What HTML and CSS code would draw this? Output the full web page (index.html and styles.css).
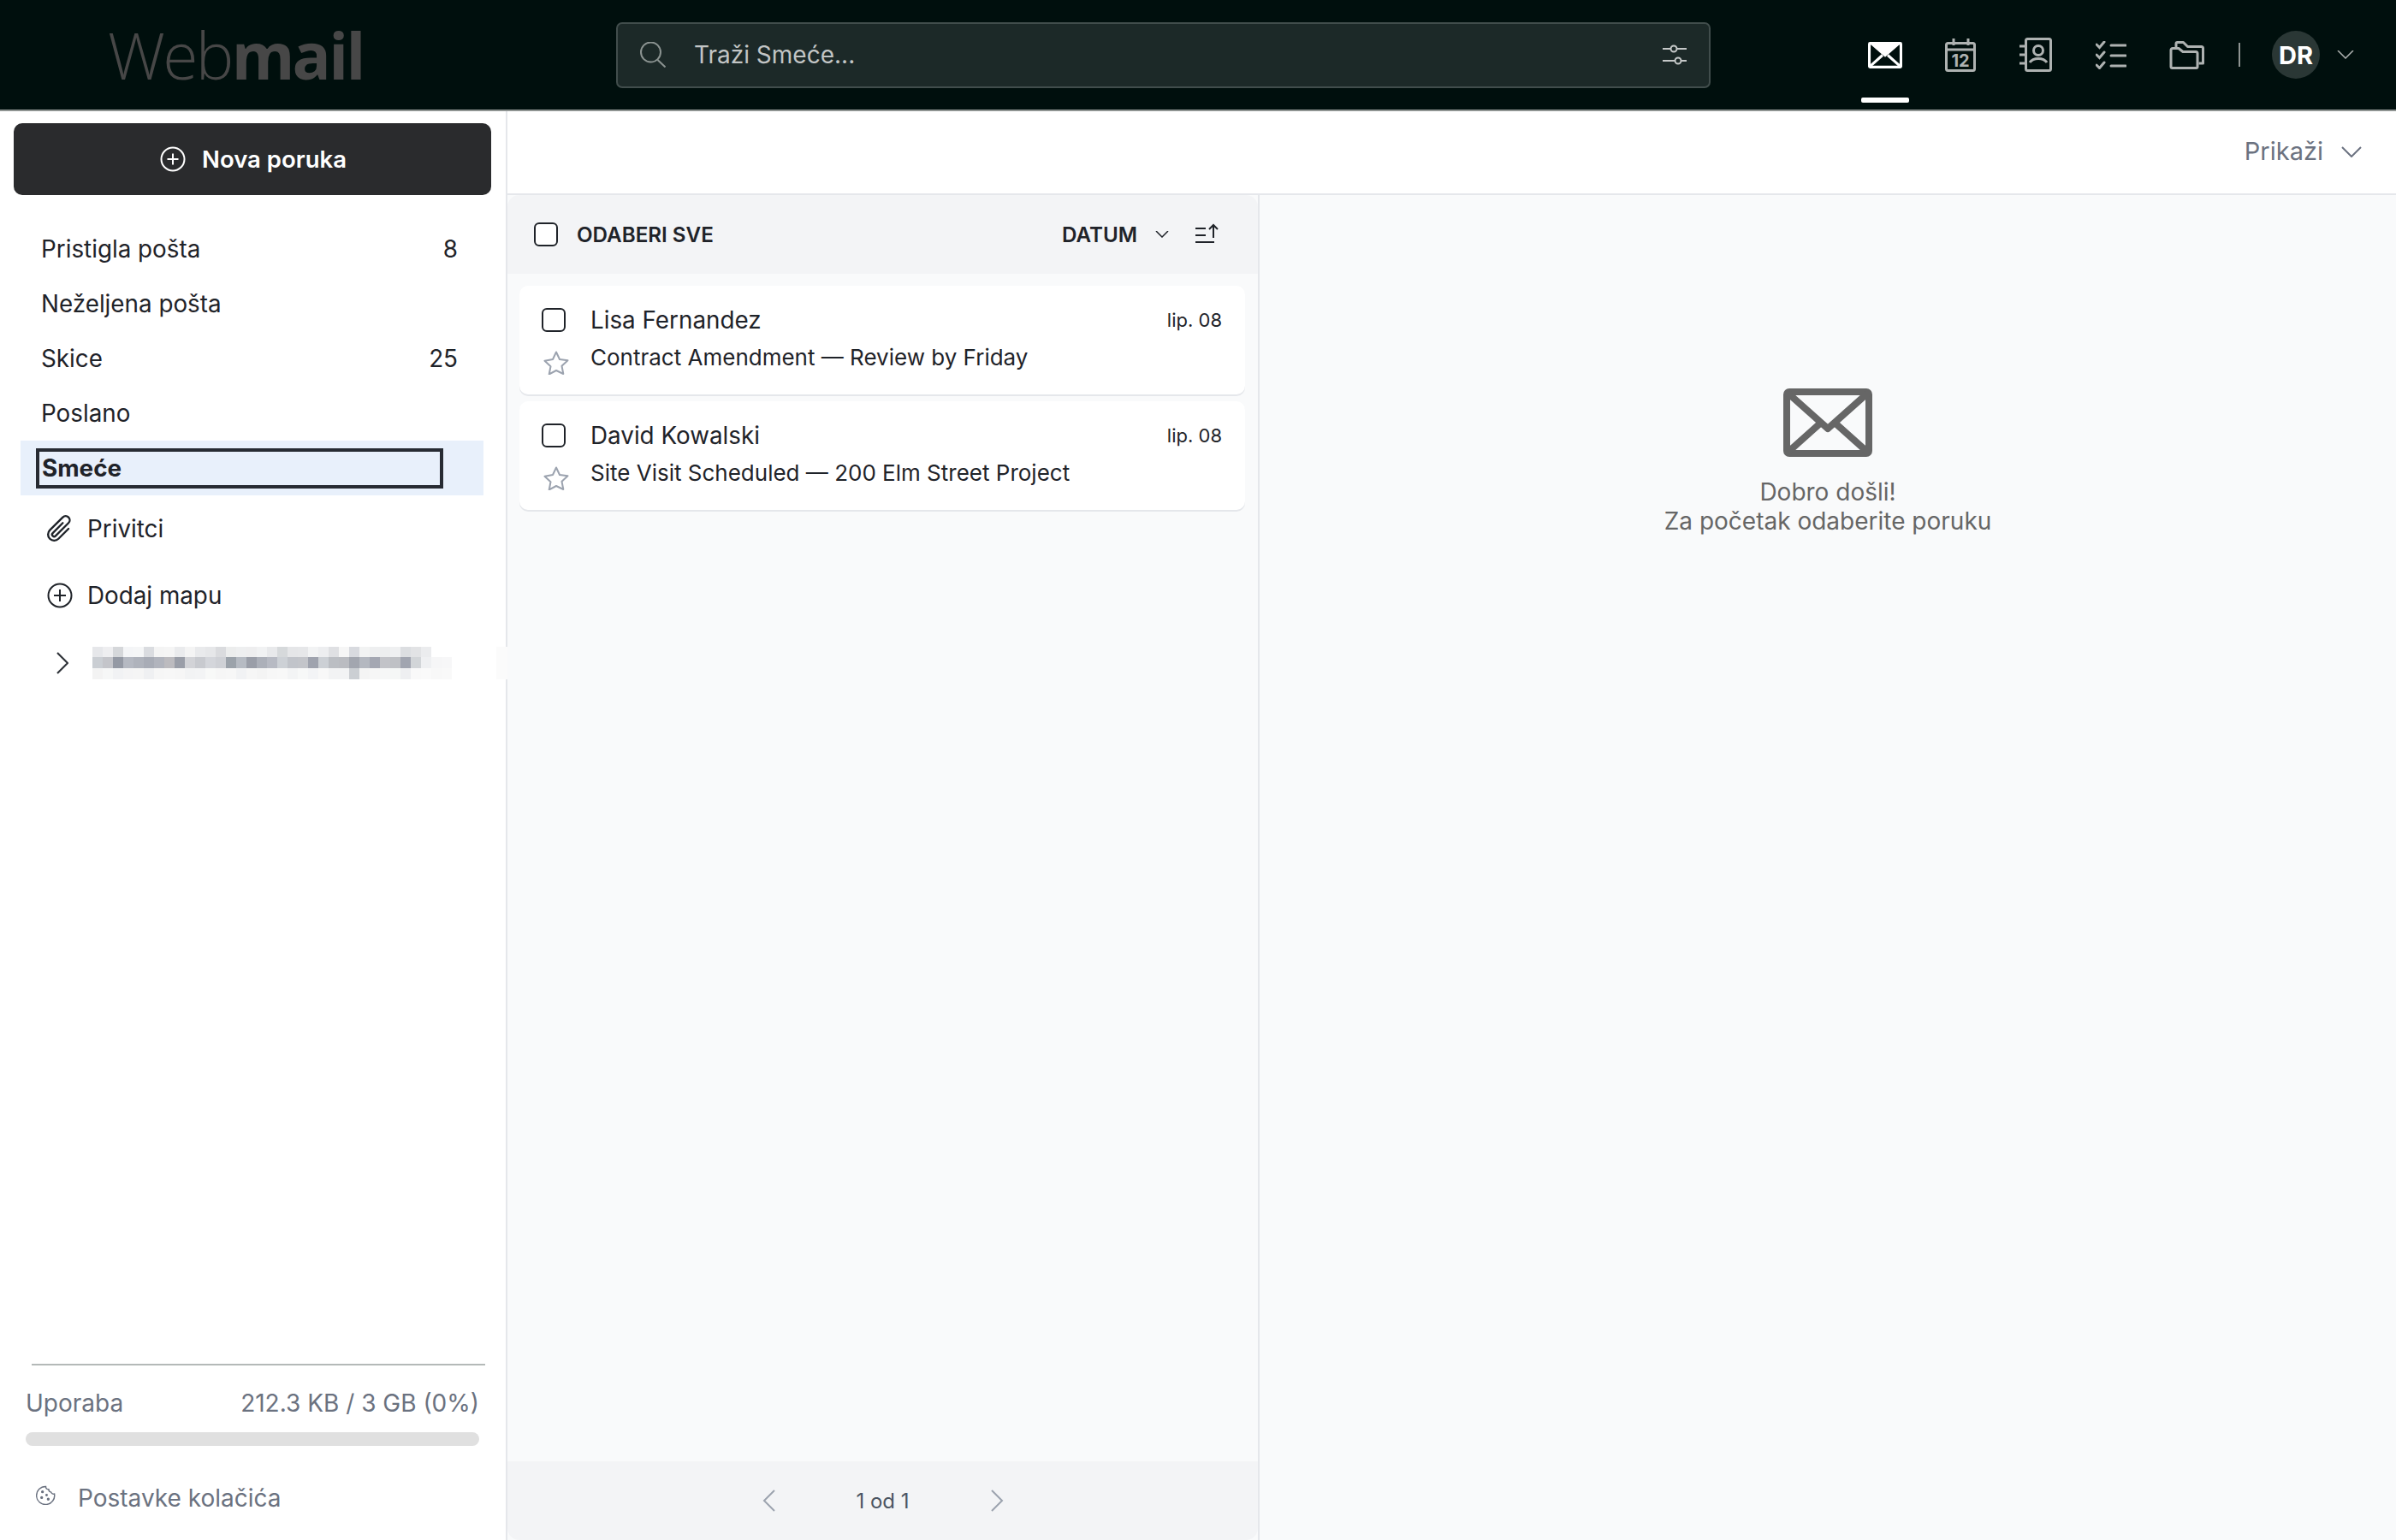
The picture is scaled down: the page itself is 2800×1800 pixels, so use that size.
FILE: index.html
```html
<!DOCTYPE html>
<html lang="hr">
<head>
    <meta charset="UTF-8">
    <meta name="viewport" content="width=device-width, initial-scale=1.0">
    <title>Webmail</title>
    <link rel="stylesheet" href="styles.css">
</head>
<body>
    <header class="topbar">
        <div class="logo"><span class="logo-light">Web</span><span class="logo-bold">mail</span></div>
        <div class="search">
            <svg class="search-icon" viewBox="0 0 30 30" fill="none" stroke="currentColor" stroke-width="2"><circle cx="12.5" cy="12" r="11.5"/><path d="M20.5 21l9 8.500"/></svg>
            <span class="search-text">Traži Smeće...</span>
            <svg class="filter-icon" viewBox="0 0 28 24" fill="none" stroke="currentColor" stroke-width="2"><path d="M0 5h9M17 5h11M0 19h14M22 19h6"/><circle cx="13" cy="5" r="3.500"/><circle cx="18" cy="19" r="3.500"/></svg>
        </div>
        <nav class="apps">
            <a class="app app--active">
                <svg class="ic-mail" viewBox="0 0 104 80"><rect width="104" height="80" rx="6" fill="#fff"/><path d="M8 8h88v64H8z" fill="#000f0d"/><path d="M5 5h94L52 46z" fill="#fff"/><path d="M5 75l39-35M99 75L60 40" fill="none" stroke="#fff" stroke-width="8"/></svg>
            </a>
            <a class="app">
                <svg class="ic-cal" viewBox="0 0 36 39" fill="none" stroke="currentColor" stroke-width="3"><rect x="1.500" y="5.500" width="33" height="32" rx="2"/><path d="M1.500 13h33M10 0v8M27 0v8"/><text x="18" y="33" class="ic-cal-num">12</text></svg>
            </a>
            <a class="app">
                <svg class="ic-contact" viewBox="0 0 38 40" fill="none" stroke="currentColor" stroke-width="3"><rect x="7.500" y="1.500" width="29" height="37" rx="2"/><path d="M0 10h7M0 20h7M0 30h7"/><circle cx="22" cy="15" r="5.500"/><path d="M12 29c4-6 16-6 20 0"/></svg>
            </a>
            <a class="app">
                <svg class="ic-tasks" viewBox="0 0 36 33" fill="none" stroke="currentColor" stroke-width="3" stroke-linecap="round"><path d="M1 4l3.500 3.500L10 1M1 16l3.500 3.500L10 13M1 28l3.500 3.500L10 25M18 5h17M18 17h17M18 29h17"/></svg>
            </a>
            <a class="app">
                <svg class="ic-folder" viewBox="0 0 41 33" fill="none" stroke="currentColor" stroke-width="3" stroke-linejoin="round"><path d="M2 10.500a2 2 0 0 1 2-2h7l5 4h15a2 2 0 0 1 2 2V30a1.500 1.500 0 0 1-1.500 1.500H3.500A1.500 1.500 0 0 1 2 30z"/><path d="M8 8V3a1.500 1.500 0 0 1 1.500-1.500h7l5 5h16a2 2 0 0 1 2 2V26h-5"/></svg>
            </a>
        </nav>
        <span class="top-sep"></span>
        <span class="avatar">DR</span>
        <svg class="top-chevron" viewBox="0 0 20 10" fill="none" stroke="currentColor" stroke-width="1.500"><path d="M1 0l9 9 9-9"/></svg>
    </header>

    <main class="layout">
        <aside class="sidebar">
            <button class="compose">
                <svg class="plus-icon" viewBox="0 0 30 30" fill="none" stroke="currentColor" stroke-width="2"><circle cx="15" cy="15" r="13.500"/><path d="M15 8.500v13M8.500 15h13"/></svg>
                Nova poruka
            </button>
            <ul class="folders">
                <li class="folder"><span>Pristigla pošta</span><span>8</span></li>
                <li class="folder"><span>Neželjena pošta</span></li>
                <li class="folder"><span>Skice</span><span>25</span></li>
                <li class="folder"><span>Poslano</span></li>
                <li class="folder folder--active"><span class="folder-focus">Smeće</span></li>
            </ul>
            <div class="side-link side-link--clip">
                <svg class="clip-icon" viewBox="0 0 16 16" fill="currentColor"><path d="M4.500 3a2.500 2.500 0 0 1 5 0v9a1.500 1.500 0 0 1-3 0V5a.5.5 0 0 1 1 0v7a.5.5 0 0 0 1 0V3a1.500 1.500 0 1 0-3 0v9a2.500 2.500 0 0 0 5 0V5a.5.5 0 0 1 1 0v7a3.500 3.500 0 1 1-7 0z"/></svg>
                Privitci
            </div>
            <div class="side-link side-link--add">
                <svg class="add-icon" viewBox="0 0 30 30" fill="none" stroke="currentColor" stroke-width="2"><circle cx="15" cy="15" r="13.500"/><path d="M15 8v14M8 15h14"/></svg>
                Dodaj mapu
            </div>
            <div class="account">
                <svg class="account-chevron" viewBox="0 0 14 26" fill="none" stroke="currentColor" stroke-width="2.200"><path d="M1 1l12 12L1 25"/></svg>
                <svg class="account-blur" viewBox="0 0 486 38" shape-rendering="crispEdges">
                    <g>
                        <rect x="0" y="0" width="12" height="12" fill="#e6e7ea"/><rect x="12" y="0" width="12" height="12" fill="#eeeef0"/><rect x="24" y="0" width="12" height="12" fill="#d5d7da"/><rect x="36" y="0" width="12" height="12" fill="#f4f5f7"/><rect x="48" y="0" width="12" height="12" fill="#f5f6f7"/><rect x="60" y="0" width="12" height="12" fill="#dadce0"/><rect x="72" y="0" width="12" height="12" fill="#f4f4f4"/><rect x="84" y="0" width="12" height="12" fill="#f5f5f5"/><rect x="96" y="0" width="12" height="12" fill="#eaebed"/><rect x="108" y="0" width="12" height="12" fill="#f4f4f4"/><rect x="120" y="0" width="12" height="12" fill="#e9eaec"/><rect x="132" y="0" width="12" height="12" fill="#e6e7e9"/><rect x="144" y="0" width="12" height="12" fill="#dadbde"/><rect x="156" y="0" width="12" height="12" fill="#eceded"/><rect x="168" y="0" width="12" height="12" fill="#eeeff0"/><rect x="180" y="0" width="12" height="12" fill="#eeeeef"/><rect x="192" y="0" width="12" height="12" fill="#f1f2f3"/><rect x="204" y="0" width="12" height="12" fill="#e8e9eb"/><rect x="216" y="0" width="12" height="12" fill="#d6d9db"/><rect x="228" y="0" width="12" height="12" fill="#e5e6e8"/><rect x="240" y="0" width="12" height="12" fill="#e6e7e9"/><rect x="252" y="0" width="12" height="12" fill="#f2f3f4"/><rect x="264" y="0" width="12" height="12" fill="#edeef0"/><rect x="276" y="0" width="12" height="12" fill="#dfe0e3"/><rect x="288" y="0" width="12" height="12" fill="#f6f6f6"/><rect x="300" y="0" width="12" height="12" fill="#d8dadf"/><rect x="312" y="0" width="12" height="12" fill="#f2f3f3"/><rect x="324" y="0" width="12" height="12" fill="#eeeff0"/><rect x="336" y="0" width="12" height="12" fill="#edeeef"/><rect x="348" y="0" width="12" height="12" fill="#eff0f1"/><rect x="360" y="0" width="12" height="12" fill="#dcdee1"/><rect x="372" y="0" width="12" height="12" fill="#e2e3e5"/><rect x="384" y="0" width="12" height="12" fill="#ebecee"/>
                    </g>
                    <g>
                        <rect x="0" y="12" width="12" height="13" fill="#caced3"/><rect x="12" y="12" width="12" height="13" fill="#c4c5ca"/><rect x="24" y="12" width="12" height="13" fill="#9499a4"/><rect x="36" y="12" width="12" height="13" fill="#b5b9c2"/><rect x="48" y="12" width="12" height="13" fill="#afb3bc"/><rect x="60" y="12" width="12" height="13" fill="#a8acb6"/><rect x="72" y="12" width="12" height="13" fill="#b1b4bd"/><rect x="84" y="12" width="12" height="13" fill="#bcbbbf"/><rect x="96" y="12" width="12" height="13" fill="#9a9ea8"/><rect x="108" y="12" width="12" height="13" fill="#d2d3d7"/><rect x="120" y="12" width="12" height="13" fill="#c8cacf"/><rect x="132" y="12" width="12" height="13" fill="#d4d6db"/><rect x="144" y="12" width="12" height="13" fill="#cfd1d6"/><rect x="156" y="12" width="12" height="13" fill="#9ba2aa"/><rect x="168" y="12" width="12" height="13" fill="#b6bbc3"/><rect x="180" y="12" width="12" height="13" fill="#9a9ea8"/><rect x="192" y="12" width="12" height="13" fill="#acb0b9"/><rect x="204" y="12" width="12" height="13" fill="#b7bac3"/><rect x="216" y="12" width="12" height="13" fill="#cdd1d6"/><rect x="228" y="12" width="12" height="13" fill="#c1c4ca"/><rect x="240" y="12" width="12" height="13" fill="#c3c5ca"/><rect x="252" y="12" width="12" height="13" fill="#9fa3ae"/><rect x="264" y="12" width="12" height="13" fill="#ccd0d5"/><rect x="276" y="12" width="12" height="13" fill="#bbbec3"/><rect x="288" y="12" width="12" height="13" fill="#babcc1"/><rect x="300" y="12" width="12" height="13" fill="#a2a6af"/><rect x="312" y="12" width="12" height="13" fill="#b4b8c0"/><rect x="324" y="12" width="12" height="13" fill="#a4a7b2"/><rect x="336" y="12" width="12" height="13" fill="#c2c3c8"/><rect x="348" y="12" width="12" height="13" fill="#bfc1c5"/><rect x="360" y="12" width="12" height="13" fill="#a1a5b0"/><rect x="372" y="12" width="12" height="13" fill="#d2d5d8"/><rect x="384" y="12" width="12" height="13" fill="#eff0f2"/><rect x="396" y="12" width="12" height="13" fill="#f6f6f7"/><rect x="408" y="12" width="12" height="13" fill="#f7f7f8"/>
                    </g>
                    <g>
                        <rect x="0" y="25" width="12" height="13" fill="#f3f3f3"/><rect x="12" y="25" width="12" height="13" fill="#f6f7f7"/><rect x="24" y="25" width="12" height="13" fill="#f1f2f4"/><rect x="36" y="25" width="12" height="13" fill="#f4f4f5"/><rect x="48" y="25" width="12" height="13" fill="#f5f5f5"/><rect x="60" y="25" width="12" height="13" fill="#eff0f2"/><rect x="72" y="25" width="12" height="13" fill="#f6f6f6"/><rect x="84" y="25" width="12" height="13" fill="#f7f7f7"/><rect x="96" y="25" width="12" height="13" fill="#f6f6f6"/><rect x="108" y="25" width="12" height="13" fill="#f2f3f4"/><rect x="120" y="25" width="12" height="13" fill="#f3f4f5"/><rect x="132" y="25" width="12" height="13" fill="#f8f9f8"/><rect x="144" y="25" width="12" height="13" fill="#f6f6f6"/><rect x="156" y="25" width="12" height="13" fill="#f7f7f7"/><rect x="168" y="25" width="12" height="13" fill="#f1f2f4"/><rect x="180" y="25" width="12" height="13" fill="#f6f6f6"/><rect x="192" y="25" width="12" height="13" fill="#f4f4f4"/><rect x="204" y="25" width="12" height="13" fill="#f7f7f7"/><rect x="216" y="25" width="12" height="13" fill="#f8f8f8"/><rect x="228" y="25" width="12" height="13" fill="#f3f4f5"/><rect x="240" y="25" width="12" height="13" fill="#f7f8f8"/><rect x="252" y="25" width="12" height="13" fill="#f3f4f6"/><rect x="264" y="25" width="12" height="13" fill="#f8f8f8"/><rect x="276" y="25" width="12" height="13" fill="#f2f3f4"/><rect x="288" y="25" width="12" height="13" fill="#f2f3f4"/><rect x="300" y="25" width="12" height="13" fill="#cbcfd3"/><rect x="312" y="25" width="12" height="13" fill="#f4f4f4"/><rect x="324" y="25" width="12" height="13" fill="#f6f6f6"/><rect x="336" y="25" width="12" height="13" fill="#f6f7f7"/><rect x="348" y="25" width="12" height="13" fill="#f5f7f6"/><rect x="360" y="25" width="12" height="13" fill="#eeeff1"/><rect x="372" y="25" width="12" height="13" fill="#f9f9f9"/><rect x="384" y="25" width="12" height="13" fill="#fafafa"/><rect x="396" y="25" width="12" height="13" fill="#f8f8f8"/><rect x="408" y="25" width="12" height="13" fill="#f9f9f9"/>
                    </g>
                    <rect x="472" y="0" width="14" height="38" fill="#fbfbfb"/>
                </svg>
            </div>
            <div class="side-bottom">
                <div class="usage-text"><span>Uporaba</span><span>212.3 KB / 3 GB (0%)</span></div>
                <div class="usage-bar"></div>
                <div class="cookies">
                    <svg class="cookie-icon" viewBox="0 0 24 24" fill="none" stroke="currentColor" stroke-width="1.500"><path d="M12 1.500a3.500 3.500 0 0 0 3.500 3.500 3.500 3.500 0 0 0 3 3.500 3 3 0 0 0 4 2A11 11 0 1 1 12 1.500z"/><circle cx="8" cy="8" r="1" fill="currentColor"/><circle cx="7" cy="15" r="1" fill="currentColor"/><circle cx="13" cy="12" r=".8" fill="currentColor"/><circle cx="15" cy="17" r="1" fill="currentColor"/></svg>
                    Postavke kolačića
                </div>
            </div>
        </aside>

        <div class="content">
            <div class="toolbar">
                <span class="toolbar-label">Prikaži</span>
                <svg class="toolbar-chevron" viewBox="0 0 24 13" fill="none" stroke="currentColor" stroke-width="2"><path d="M1 1l11 11L23 1"/></svg>
            </div>
            <div class="panes">
                <section class="list">
                    <div class="list-head">
                        <input class="check" type="checkbox">
                        <span class="select-all">ODABERI SVE</span>
                        <span class="sort-label">DATUM</span>
                        <svg class="sort-chevron" viewBox="0 0 16 8" fill="none" stroke="currentColor" stroke-width="1.500"><path d="M1 0l7 7 7-7"/></svg>
                        <svg class="sort-icon" viewBox="0 0 28 23" fill="none" stroke="currentColor" stroke-width="2"><path d="M0 6h12M0 14h12M0 22h22M21 17V2M16 7l5-5 5 5"/></svg>
                    </div>
                    <div class="messages">
                        <article class="card">
                            <input class="check" type="checkbox">
                            <span class="sender">Lisa Fernandez</span>
                            <span class="date">lip. 08</span>
                            <svg class="star" viewBox="0 0 30 28" fill="none" stroke="currentColor" stroke-width="2" stroke-linejoin="round"><path d="M15 1.500l4 8.500 9.500 1.200-7 6.500 1.800 9.300L15 23l-8.300 4.500 1.800-9.300-7-6.500L11 10z"/></svg>
                            <span class="subject">Contract Amendment — Review by Friday</span>
                        </article>
                        <article class="card">
                            <input class="check" type="checkbox">
                            <span class="sender">David Kowalski</span>
                            <span class="date">lip. 08</span>
                            <svg class="star" viewBox="0 0 30 28" fill="none" stroke="currentColor" stroke-width="2" stroke-linejoin="round"><path d="M15 1.500l4 8.500 9.500 1.200-7 6.500 1.800 9.300L15 23l-8.300 4.500 1.800-9.300-7-6.500L11 10z"/></svg>
                            <span class="subject">Site Visit Scheduled — 200 Elm Street Project</span>
                        </article>
                    </div>
                    <div class="pager">
                        <svg class="pager-arrow" viewBox="0 0 15 26" fill="none" stroke="currentColor" stroke-width="2"><path d="M14 1L2 13l12 12"/></svg>
                        <span class="pager-text">1 od 1</span>
                        <svg class="pager-arrow" viewBox="0 0 15 26" fill="none" stroke="currentColor" stroke-width="2"><path d="M1 1l12 12L1 25"/></svg>
                    </div>
                </section>
                <section class="reader">
                    <svg class="reader-icon" viewBox="0 0 104 80" fill="none"><rect x="4" y="4" width="96" height="72" rx="3" stroke="#666" stroke-width="8"/><path d="M6 6l46 41 46-41M6 74l38-34M98 74L60 40" stroke="#666" stroke-width="8" stroke-linejoin="round"/></svg>
                    <p class="reader-text">Dobro došli!<br>Za početak odaberite poruku</p>
                </section>
            </div>
        </div>
    </main>
</body>
</html>
```

FILE: styles.css
```css
*{
    box-sizing: border-box;
}

body{
    margin: 0;
    height: 100vh;
    display: flex;
    flex-direction: column;
    background: #fff;
    color: #1f2329;
    font-family: "Inter", "Liberation Sans", sans-serif;
    font-size: 27.8px;
    overflow: hidden;
}

svg{
    display: block;
    flex-shrink: 0;
}

/* top bar */
.topbar{
    height: 130px;
    flex-shrink: 0;
    display: flex;
    align-items: center;
    background: #000f0d;
    border-bottom: 2px solid #8f9492;
    color: #aeb2b1;
}

.logo{
    width: 720px;
    padding-left: 126px;
    color: #474747;
    font-family: "Open Sans", sans-serif;
    font-size: 75px;
    letter-spacing: -2.7px;
    line-height: 1;
}

.logo-light{
    font-weight: 300;
}

.logo-bold{
    font-weight: 700;
}

.search{
    width: 1279px;
    height: 77px;
    display: flex;
    align-items: center;
    padding: 0 26px;
    background: #1c2928;
    border: 2px solid #414d4c;
    border-radius: 7px;
}

.search-icon{
    width: 30px;
    height: 30px;
    color: #8b9391;
}

.search-text{
    flex: 1;
    margin-left: 33px;
    color: #c2c5c5;
    font-size: 28px;
}

.filter-icon{
    width: 28px;
    height: 24px;
    color: #c5c8c8;
}

.apps{
    display: flex;
    gap: 32px;
    margin-left: 176px;
    height: 128px;
}

.app{
    width: 56px;
    display: flex;
    align-items: center;
    justify-content: center;
    position: relative;
}

.app--active{
    color: #fff;
}

.app--active::after{
    content: "";
    position: absolute;
    left: 0;
    right: 0;
    bottom: 8px;
    height: 6px;
    background: #fff;
    border-radius: 2px;
}

.ic-mail{
    width: 40px;
    height: 31px;
}

.ic-cal{
    width: 36px;
    height: 39px;
}

.ic-cal-num{
    fill: currentColor;
    stroke: none;
    font-size: 20px;
    font-weight: 700;
    text-anchor: middle;
}

.ic-contact{
    width: 38px;
    height: 40px;
}

.ic-tasks{
    width: 36px;
    height: 33px;
}

.ic-folder{
    width: 41px;
    height: 33px;
}

.top-sep{
    width: 2px;
    height: 28px;
    margin-left: 33px;
    background: #8f9492;
}

.avatar{
    width: 56px;
    height: 56px;
    margin-left: 37px;
    border-radius: 50%;
    display: flex;
    align-items: center;
    justify-content: center;
    background: #2a3735;
    color: #fff;
    font-size: 29px;
    font-weight: 700;
}

.top-chevron{
    width: 20px;
    height: 10px;
    margin-left: 20px;
}

/* page */
.layout{
    flex: 1;
    display: flex;
    min-height: 0;
}

.sidebar{
    width: 593px;
    flex-shrink: 0;
    display: flex;
    flex-direction: column;
    border-right: 2px solid #e5e7eb;
}

.compose{
    height: 84px;
    margin: 14px 17px 0 16px;
    padding-left: 8px;
    flex-shrink: 0;
    display: flex;
    align-items: center;
    justify-content: center;
    gap: 19px;
    border: none;
    border-radius: 10px;
    background: #2a2b2d;
    color: #fff;
    font-family: inherit;
    font-size: 27.5px;
    font-weight: 600;
}

.plus-icon{
    width: 30px;
    height: 30px;
}

.folders{
    list-style: none;
    margin: 31px 26px 0 24px;
    padding: 0;
}

.folder{
    height: 64px;
    display: flex;
    align-items: center;
    justify-content: space-between;
    padding: 0 30px 0 24px;
}

.folder--active{
    padding: 9px 47px 8px 18px;
    background: #e8f0fb;
    font-weight: 700;
}

.folder-focus{
    flex: 1;
    align-self: stretch;
    display: flex;
    align-items: center;
    padding: 0 0 2px 3px;
    border: 4px solid #272b33;
}

.side-link{
    display: flex;
    align-items: center;
    height: 64px;
    margin-top: 7px;
}

.side-link--add{
    margin-top: 14px;
}

.clip-icon{
    width: 38px;
    height: 38px;
    margin-left: 51px;
    margin-right: 13px;
    transform: rotate(45deg);
}

.add-icon{
    width: 30px;
    height: 30px;
    margin-left: 55px;
    margin-right: 17px;
}

.account{
    display: flex;
    align-items: center;
    height: 38px;
    margin-top: 28px;
    padding-left: 66px;
    gap: 28px;
}

.account-chevron{
    width: 14px;
    height: 26px;
    color: #30343a;
}

.account-blur{
    width: 486px;
    height: 38px;
}

.side-bottom{
    margin-top: auto;
    margin-left: 30px;
    margin-right: 31px;
    padding-bottom: 32px;
}

.side-bottom::before{
    content: "";
    display: block;
    height: 2px;
    margin: 0 -7px 0 7px;
    background: #b4b9b8;
}

.usage-text{
    display: flex;
    justify-content: space-between;
    margin-top: 27px;
    color: #6b7280;
    font-size: 28px;
    line-height: 34px;
}

.usage-bar{
    height: 16px;
    margin-top: 17px;
    border-radius: 8px;
    background: #e0e0e0;
}

.cookies{
    display: flex;
    align-items: center;
    gap: 26px;
    margin-top: 44px;
    margin-left: 12px;
    color: #6b7280;
    font-size: 28px;
    line-height: 34px;
}

.cookie-icon{
    width: 23px;
    height: 23px;
    margin-top: -8px;
}

/* right part */
.content{
    flex: 1;
    min-width: 0;
    display: flex;
    flex-direction: column;
}

.toolbar{
    height: 98px;
    flex-shrink: 0;
    display: flex;
    align-items: center;
    justify-content: flex-end;
    gap: 21px;
    padding: 0 40px 2px 0;
    border-bottom: 2px solid #e5e7eb;
    color: #6b7280;
    font-size: 29px;
}

.toolbar-label{
    margin-top: -2px;
}

.toolbar-chevron{
    width: 24px;
    height: 13px;
}

.panes{
    flex: 1;
    min-height: 0;
    display: flex;
}

.list{
    width: 879px;
    flex-shrink: 0;
    display: flex;
    flex-direction: column;
    background: #f9fafb;
    border-right: 2px solid #e5e7eb;
}

.list-head{
    height: 92px;
    flex-shrink: 0;
    display: flex;
    align-items: center;
    padding: 0 45px 0 31px;
    background: #f3f4f6;
    border-radius: 14px 14px 0 0;
}

.check{
    appearance: none;
    width: 28px;
    height: 28px;
    margin: 0;
    flex-shrink: 0;
    background: #fff;
    border: 2px solid #1f2329;
    border-radius: 6px;
}

.select-all,
.sort-label{
    font-size: 24.2px;
    font-weight: 600;
}

.select-all{
    margin-left: 22px;
    margin-right: auto;
}

.sort-chevron{
    width: 16px;
    height: 8px;
    margin-left: 21px;
}

.sort-icon{
    width: 28px;
    height: 23px;
    margin-left: 31px;
    margin-top: -4px;
}

.messages{
    flex: 1;
    display: flex;
    flex-direction: column;
    gap: 8px;
    padding: 14px 15px 0 14px;
}

.card{
    height: 127px;
    display: grid;
    grid-template-columns: 57px 1fr auto;
    grid-template-rows: 28px 34px;
    row-gap: 12px;
    align-items: center;
    padding: 26px 27px 0 26px;
    background: #fff;
    border-radius: 10px;
    box-shadow: 0 2px 0 #e5e7eb;
}

.sender{
    font-size: 27.8px;
}

.date{
    font-size: 22px;
}

.star{
    width: 30px;
    height: 28px;
    margin: 14px 0 0 2px;
    color: #9ca3af;
}

.subject{
    grid-column: 2 / 4;
    font-size: 26px;
}

.pager{
    height: 92px;
    flex-shrink: 0;
    display: flex;
    align-items: center;
    justify-content: center;
    gap: 26px;
    background: #f3f4f6;
    border-radius: 0 0 14px 14px;
}

.pager-arrow{
    width: 15px;
    height: 26px;
    color: #9ca3af;
}

.pager-text{
    width: 200px;
    text-align: center;
    color: #4b5563;
    font-size: 24px;
}

.reader{
    flex: 1;
    display: flex;
    flex-direction: column;
    align-items: center;
    padding-top: 226px;
    background: #f9fafb;
    color: #666;
}

.reader-icon{
    width: 104px;
    height: 80px;
}

.reader-text{
    margin: 24px 0 0;
    text-align: center;
    font-size: 28px;
    line-height: 34px;
}
```
